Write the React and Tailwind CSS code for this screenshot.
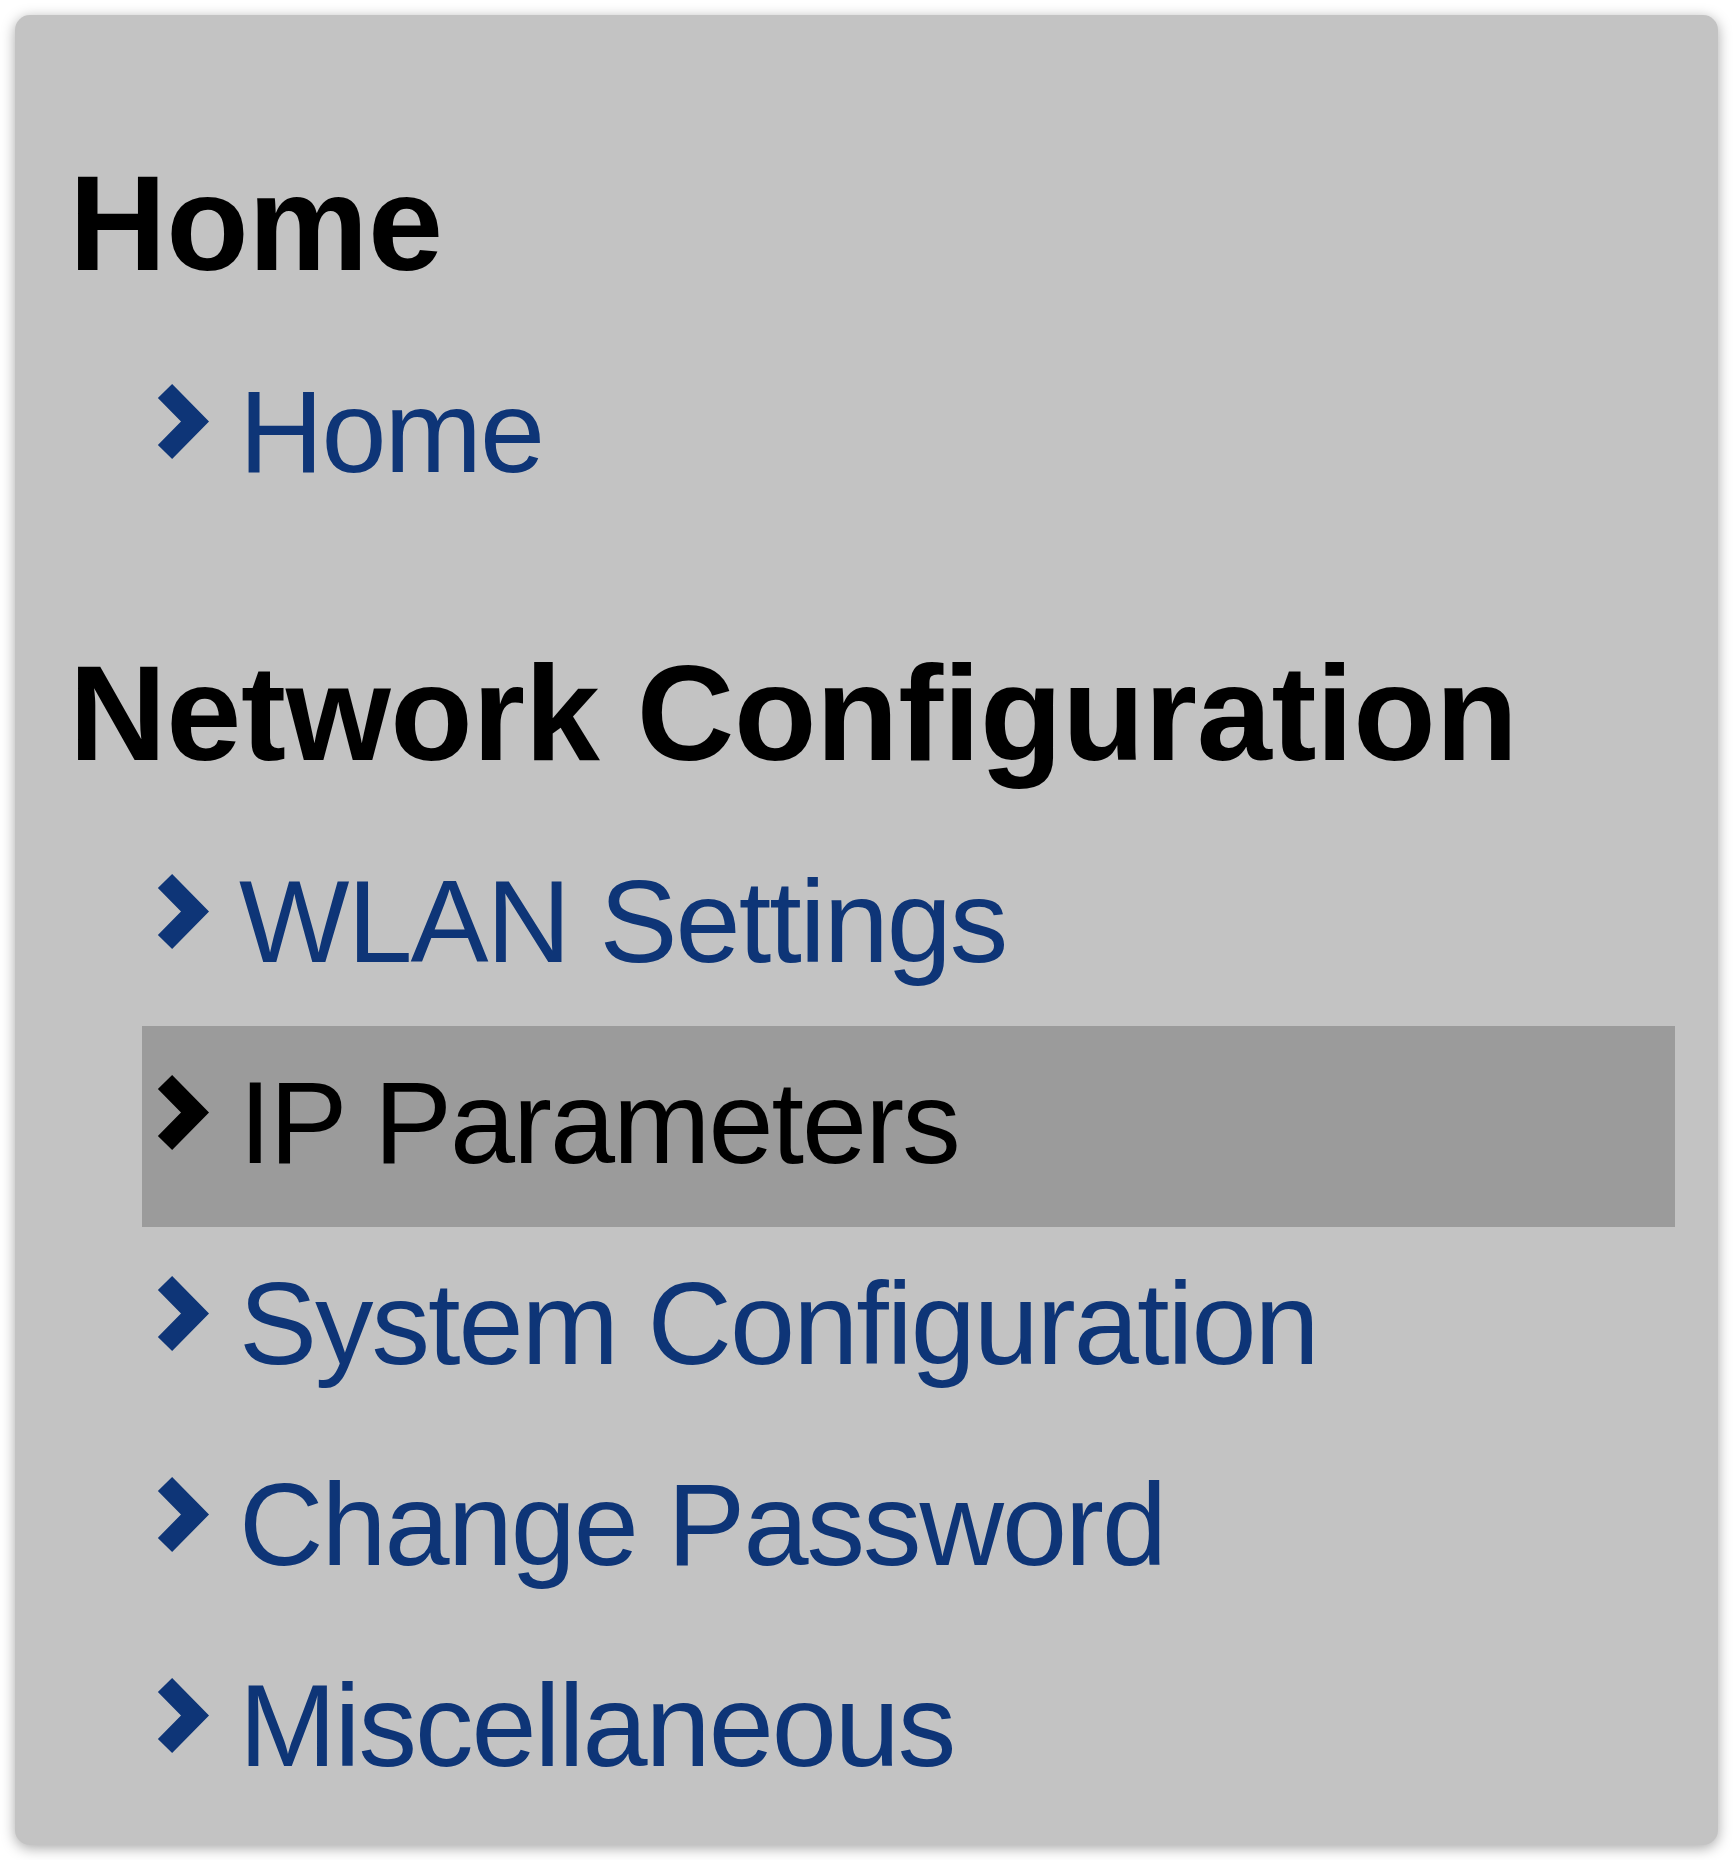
import React from "react";

const sections = [
  { title: "Home", items: ["Home"] },
  {
    title: "Network Configuration",
    items: ["WLAN Settings", "IP Parameters", "System Configuration", "Change Password", "Miscellaneous"],
  },
];

const active = "IP Parameters";

const Chevron = ({ color }) => (
  <svg width="56" height="77" viewBox="0 0 56 77" className="shrink-0 mt-[49px]">
    <polyline
      points="9,7 39,37.5 9,68"
      fill="none"
      stroke={color}
      strokeWidth="20"
      strokeLinejoin="miter"
      strokeLinecap="butt"
    />
  </svg>
);

const App = () => {
  return (
    <div className="min-h-screen bg-white p-[15px] font-['Liberation_Sans',Arial,sans-serif]">
      <div className="bg-[#c3c3c3] rounded-[15px] shadow-[0_3px_14px_rgba(0,0,0,0.35)] pl-[54px] pr-[43px] pt-[31px] pb-[15px]">
        {sections.map((sec) => (
          <div key={sec.title} className="mt-[100px]">
            <h2 className="text-[135px] leading-[155px] font-bold text-black whitespace-nowrap tracking-[-0.3px]">
              {sec.title}
            </h2>
            <ul className="mt-[34px] ml-[73px]">
              {sec.items.map((item) => {
                const on = item === active;
                return (
                  <li
                    key={item}
                    className={`h-[201px] flex items-start pl-[14px] ${on ? "bg-[#9b9b9b]" : ""}`}
                  >
                    <Chevron color={on ? "#000000" : "#0e3577"} />
                    <a
                      href="#"
                      className={`ml-[27px] pt-[30px] text-[117px] leading-[134px] tracking-[-2px] whitespace-nowrap ${
                        on ? "text-black" : "text-[#0e3577]"
                      }`}
                    >
                      {item}
                    </a>
                  </li>
                );
              })}
            </ul>
          </div>
        ))}
      </div>
    </div>
  );
};

export default App;
